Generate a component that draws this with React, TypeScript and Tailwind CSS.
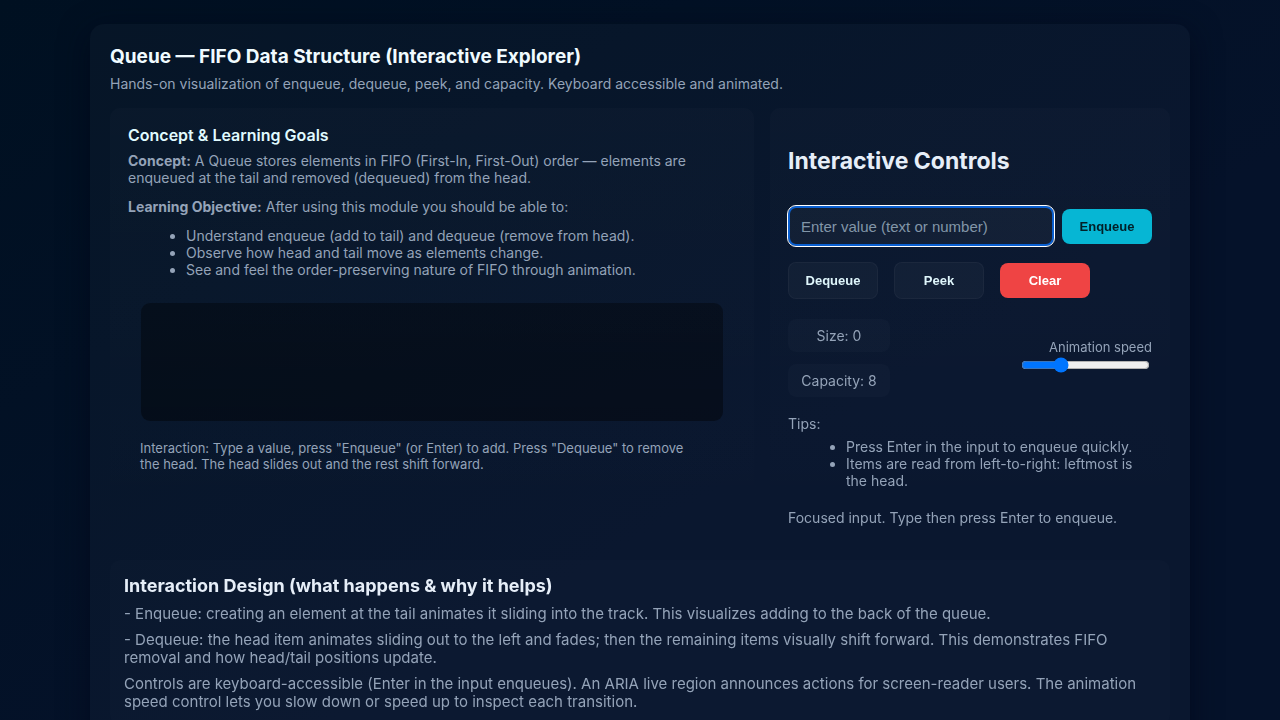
import { useState } from "react";

const goals = [
  "Understand enqueue (add to tail) and dequeue (remove from head).",
  "Observe how head and tail move as elements change.",
  "See and feel the order-preserving nature of FIFO through animation.",
];

const tips = [
  "Press Enter in the input to enqueue quickly.",
  "Items are read from left-to-right: leftmost is the head.",
];

const panel = "rounded-[10px] bg-linear-to-b from-white/[0.015] to-transparent";
const button =
  "min-w-[90px] cursor-pointer rounded-lg px-3 py-2.5 font-['Liberation_Sans',sans-serif] text-[13px] leading-[15px] font-bold";
const ghost = "border border-white/[0.04] bg-white/[0.03] text-[#dff6fb]";

function Concept() {
  return (
    <section className={`${panel} p-[18px] text-sm leading-[17px]`}>
      <h2 className="mb-[7px] text-base leading-[19px] font-semibold text-[#e0fbff]">
        Concept &amp; Learning Goals
      </h2>
      <p className="mb-3">
        <strong>Concept:</strong> A Queue stores elements in FIFO (First-In, First-Out) order —
        elements are enqueued at the tail and removed (dequeued) from the head.
      </p>
      <p className="mb-3">
        <strong>Learning Objective:</strong> After using this module you should be able to:
      </p>
      <ul className="list-disc pl-[58px]">
        {goals.map((goal) => (
          <li key={goal}>{goal}</li>
        ))}
      </ul>
      <div className="mt-6 px-3">
        <div
          className="h-[120px] rounded-[10px] border border-transparent bg-linear-to-b from-black/35 to-black/40 bg-clip-padding"
          aria-label="Queue track"
        />
        <p className="mt-[18px] pr-6 text-[13px] leading-4">
          Interaction: Type a value, press "Enqueue" (or Enter) to add. Press "Dequeue" to remove
          the head. The head slides out and the rest shift forward.
        </p>
      </div>
    </section>
  );
}

function Controls() {
  const [value, setValue] = useState("");
  const [speed, setSpeed] = useState(410);
  return (
    <section className={`${panel} px-[18px] pt-[38px] pb-[18px] text-sm leading-[17px]`}>
      <h2 className="text-[23px] leading-[31px] font-bold text-[#e6eef8]">Interactive Controls</h2>
      <div className="mt-[29px] flex items-center gap-2">
        <input
          autoFocus
          aria-label="Value to enqueue"
          placeholder="Enter value (text or number)"
          value={value}
          onChange={(e) => setValue(e.target.value)}
          className="h-10 min-w-0 flex-1 rounded-lg border-2 border-[#0a5fd0] bg-white/[0.03] px-[11px] font-['Liberation_Sans',sans-serif] text-[15px] text-[#e6eef8] outline-1 outline-white placeholder:text-[#8296a8]"
        />
        <button className={`${button} bg-[#06b6d4] text-[#022028]`}>Enqueue</button>
      </div>
      <div className="mt-4 flex items-center gap-4">
        <button className={`${button} ${ghost}`}>Dequeue</button>
        <button className={`${button} ${ghost}`}>Peek</button>
        <button className={`${button} bg-[#ef4444] text-white`}>Clear</button>
      </div>
      <div className="mt-5 flex items-center justify-between">
        <div className="flex w-[102px] flex-col gap-3 text-center">
          <div className="rounded-lg bg-white/[0.02] py-2">Size: 0</div>
          <div className="rounded-lg bg-white/[0.02] py-2">Capacity: 8</div>
        </div>
        <div className="flex flex-col items-end">
          <label htmlFor="speed" className="text-[13px] leading-4">
            Animation speed
          </label>
          <input
            id="speed"
            type="range"
            min={100}
            max={1200}
            value={speed}
            onChange={(e) => setSpeed(Number(e.target.value))}
            className="mx-0.5 mt-0.5 mb-1 h-4 w-[129px]"
          />
        </div>
      </div>
      <p className="mt-[18px] mb-1.5">Tips:</p>
      <ul className="list-disc pl-[58px]">
        {tips.map((tip) => (
          <li key={tip}>{tip}</li>
        ))}
      </ul>
      <p className="mt-5" aria-live="polite">
        Focused input. Type then press Enter to enqueue.
      </p>
    </section>
  );
}

export default function App() {
  return (
    <div className="min-h-screen bg-linear-to-br from-[#001021] to-[#05122a] to-60% p-6 font-[Inter,sans-serif] text-[#94a3b8]">
      <main className="mx-auto max-w-[1100px] rounded-[14px] bg-white/[0.024] p-5 shadow-[0_8px_30px_rgba(2,6,23,0.6)]">
        <h1 className="text-[19px] leading-[26px] font-bold text-[#f0fbff]">
          Queue — FIFO Data Structure (Interactive Explorer)
        </h1>
        <p className="mt-[5px] text-sm leading-[17px]">
          Hands-on visualization of enqueue, dequeue, peek, and capacity. Keyboard accessible and
          animated.
        </p>
        <div className="mt-4 grid grid-cols-[minmax(0,1fr)_400px] gap-4">
          <Concept />
          <Controls />
        </div>
        <section className="mt-4 rounded-[10px] bg-white/[0.01] p-3.5 text-[15px] leading-[18px]">
          <h2 className="text-lg leading-[23px] font-bold text-[#e6eef8]">
            Interaction Design (what happens &amp; why it helps)
          </h2>
          <p className="mt-2">
            - Enqueue: creating an element at the tail animates it sliding into the track. This
            visualizes adding to the back of the queue.
          </p>
          <p className="mt-2">
            - Dequeue: the head item animates sliding out to the left and fades; then the remaining
            items visually shift forward. This demonstrates FIFO removal and how head/tail positions
            update.
          </p>
          <p className="mt-2">
            Controls are keyboard-accessible (Enter in the input enqueues). An ARIA live region
            announces actions for screen-reader users. The animation speed control lets you slow
            down or speed up to inspect each transition.
          </p>
        </section>
      </main>
    </div>
  );
}
